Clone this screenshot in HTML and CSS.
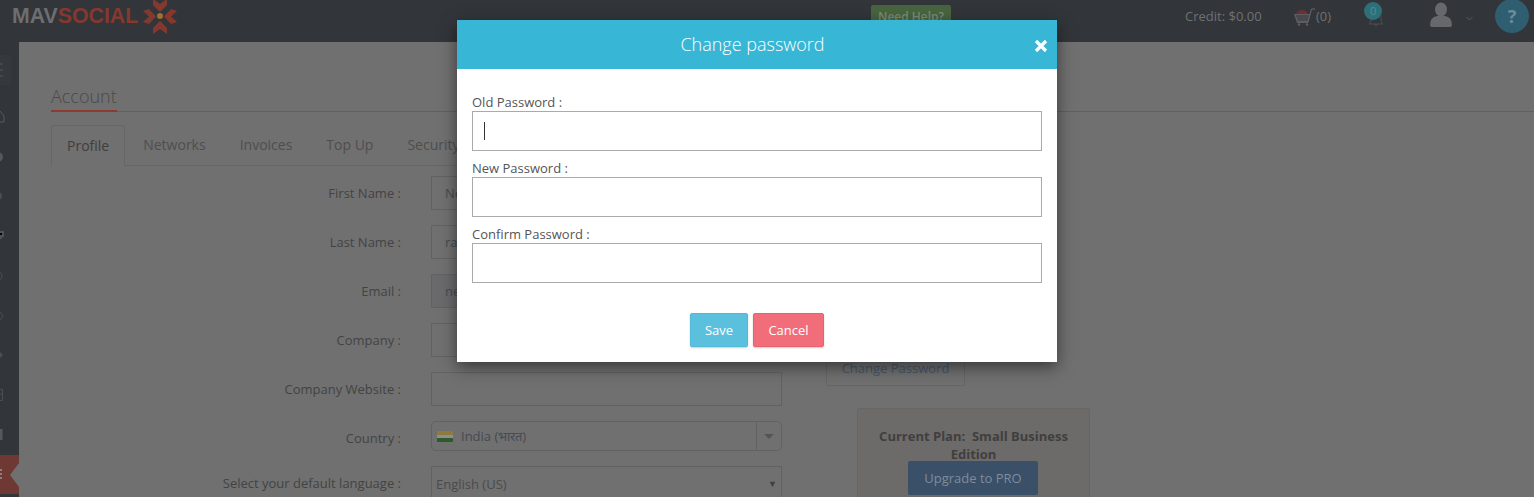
FILE: index.html
```html
<!DOCTYPE html>
<html lang="en">
<head>
  <meta charset="UTF-8" />
  <title>Account - Change Password</title>
  <link rel="stylesheet" href="styles.css">
</head>
<body>

  <!-- Top bar -->
  <div class="topbar">
    <div class="logo">
      <span class="logo-mav">MAV</span><span class="logo-social">SOCIAL</span>
      <svg class="logo-mark" width="38" height="34" viewBox="0 0 38 34">
        <g fill="#85392e">
          <path d="M12 -1 L19 4 L26 -1 L26 5 L19 12 L12 5 Z"/>
          <path d="M12 34 L19 29 L26 34 L26 28 L19 21 L12 28 Z"/>
          <path d="M2 11 L8 16.500 L2 22 L8 24 L15 16.500 L8 9 Z"/>
          <path d="M36 11 L30 16.500 L36 22 L30 24 L23 16.500 L30 9 Z"/>
        </g>
        <circle cx="19" cy="16" r="3" fill="#a0702e"/>
      </svg>
    </div>
    <a class="need-help">Need Help?</a>
    <span class="credit">Credit: $0.00</span>
    <div class="cart">
      <svg width="22" height="20" viewBox="0 0 22 20">
        <path d="M3 8 A6.500 6.500 0 0 1 15 8 Z" fill="#6e2f33"/>
        <path d="M1 8 H17 L15 17 H4 Z" fill="#5c5f62"/>
        <path d="M3 10 H16 M4 12 H15.500 M4.500 14 H15" stroke="#32353a" stroke-width="1"/>
        <path d="M15 16 L18.500 3 H22" stroke="#66686a" stroke-width="1" fill="none"/>
        <circle cx="6" cy="18.500" r="1.200" fill="#5c5f62"/>
        <circle cx="14" cy="18.500" r="1.200" fill="#5c5f62"/>
      </svg>
      <span>(0)</span>
    </div>
    <div class="bell">
      <svg width="16" height="12" viewBox="0 0 16 12">
        <path d="M3 1 V6 Q3 9 1 10 H15 Q13 9 13 6 V1 M6 11 H10" stroke="#4c4f53" fill="none"/>
      </svg>
      <span class="bell-count">0</span>
    </div>
    <div class="user">
      <svg width="22" height="26" viewBox="0 0 22 26">
        <ellipse cx="11" cy="7.500" rx="6" ry="7" fill="#66686b"/>
        <path d="M0 23 Q0 15 7 14 H15 Q22 15 22 23 Q22 25 20 25 H2 Q0 25 0 23 Z" fill="#66686b"/>
      </svg>
      <svg class="user-caret" width="7" height="5" viewBox="0 0 7 5">
        <path d="M0.500 1 L3.500 4 L6.500 1" stroke="#5a5d60" fill="none"/>
      </svg>
    </div>
    <div class="help">?</div>
  </div>

  <div class="wrapper">
    <!-- Collapsed sidebar -->
    <div class="sidebar">
      <div class="side-menu">
        <svg width="4" height="14" viewBox="0 0 4 14"><path d="M0 1 H3 M0 7 H3 M0 13 H3" stroke="#55585c" stroke-width="1"/></svg>
      </div>
      <div class="side-item"><svg width="5" height="12" viewBox="0 0 5 12"><path d="M-2 5 L0 0 L4 5 V11 H-2" stroke="#55585c" fill="none"/></svg></div>
      <div class="side-item"><svg width="3" height="10" viewBox="0 0 3 10"><circle cx="-2" cy="5" r="5" fill="#55585c"/></svg></div>
      <div class="side-item"><svg width="3" height="10" viewBox="0 0 3 10"><circle cx="-2" cy="5" r="4" fill="#4b4e52"/></svg></div>
      <div class="side-item"><svg width="4" height="10" viewBox="0 0 4 10"><path d="M0 1 H3 V5 H0 M0 7 H2" stroke="#4f5256" stroke-width="2"/></svg></div>
      <div class="side-item"><svg width="3" height="10" viewBox="0 0 3 10"><circle cx="-3" cy="5" r="5" stroke="#4b4e52" fill="none"/></svg></div>
      <div class="side-item"><svg width="4" height="10" viewBox="0 0 4 10"><path d="M0 1 L3 5 L0 9" stroke="#4b4e52" fill="none"/></svg></div>
      <div class="side-item"><svg width="4" height="10" viewBox="0 0 4 10"><path d="M0 2 L3 5 L0 8 Z" fill="#4b4e52"/></svg></div>
      <div class="side-item"><svg width="4" height="12" viewBox="0 0 4 12"><path d="M0 0.500 H2.500 V11.500 H0 M0 5 H2.500" stroke="#4b4e52" fill="none"/></svg></div>
      <div class="side-item"><svg width="3" height="12" viewBox="0 0 3 12"><rect width="2.500" height="11" fill="#55585c"/></svg></div>
      <div class="side-active"><svg width="3" height="10" viewBox="0 0 3 10"><path d="M0 1 H2 M0 5 H2 M0 9 H2" stroke="#8f7f7d" stroke-width="2"/></svg></div>
    </div>

    <!-- Main content -->
    <div class="content">
      <div class="page-title"><span>Account</span></div>

      <div class="tabs">
        <a class="tab active">Profile</a>
        <a class="tab">Networks</a>
        <a class="tab">Invoices</a>
        <a class="tab">Top Up</a>
        <a class="tab">Security</a>
      </div>

      <div class="profile">
        <div class="form">
          <div class="row"><label>First Name :</label><div class="field">Neha</div></div>
          <div class="row"><label>Last Name :</label><div class="field">rana</div></div>
          <div class="row"><label>Email :</label><div class="field readonly">neha</div></div>
          <div class="row"><label>Company :</label><div class="field"></div></div>
          <div class="row"><label>Company Website :</label><div class="field"></div></div>
          <div class="row row-country">
            <label>Country :</label>
            <div class="field country">
              <span class="flag"></span>
              <span class="country-name">India (भारत)</span>
              <span class="country-arrow"></span>
            </div>
          </div>
          <div class="row row-lang">
            <label>Select your default language :</label>
            <div class="field lang">English (US)<span class="lang-arrow">▼</span></div>
          </div>
        </div>

        <div class="side-panel">
          <a class="change-btn">Change Password</a>
          <div class="plan">
            <div class="plan-name">Current Plan:&nbsp; Small Business Edition</div>
            <a class="upgrade">Upgrade to PRO</a>
          </div>
        </div>
      </div>
    </div>
  </div>

  <!-- Change password modal -->
  <div class="modal">
    <div class="modal-head">
      <h2>Change password</h2>
      <svg class="modal-close" width="14" height="14" viewBox="0 0 14 14">
        <path d="M2 2 L12 12 M12 2 L2 12" stroke="#fff" stroke-width="3.200"/>
      </svg>
    </div>
    <div class="modal-body">
      <label>Old Password :</label>
      <div class="pw-input"><span class="caret"></span></div>
      <label>New Password :</label>
      <div class="pw-input"></div>
      <label>Confirm Password :</label>
      <div class="pw-input"></div>
    </div>
    <div class="modal-foot">
      <button class="btn-save">Save</button>
      <button class="btn-cancel">Cancel</button>
    </div>
  </div>

</body>
</html>
```

FILE: styles.css
```css
html, body {
  margin: 0;
  padding: 0;
  height: 100%;
  overflow: hidden;
  font-family: "Open Sans", Arial, sans-serif;
  font-size: 13px;
  background-color: #707070;
  color: #434343;
}

/* Top bar */
.topbar {
  display: flex;
  align-items: flex-start;
  height: 42px;
  background-color: #32353a;
  color: #6e6e6e;
}
.logo {
  display: flex;
  width: 180px;
  padding-left: 12px;
  box-sizing: border-box;
  font-family: "Liberation Sans", Arial, sans-serif;
  font-weight: bold;
  font-size: 21.300px;
  line-height: 32px;
}
.logo-mav {
  color: #6d6e6f;
}
.logo-social {
  color: #85392e;
  margin-right: 3px;
}
.logo-mark {
  flex: none;
}
.need-help {
  margin: 5px 0 0 691px;
  width: 80px;
  height: 24px;
  line-height: 24px;
  text-align: center;
  font-size: 12px;
  font-weight: 600;
  background-color: #48643f;
  color: #7d8a78;
  border-radius: 2px;
}
.credit {
  margin: 6px 0 0 234px;
  line-height: 20px;
  color: #6f7173;
  width: 78px;
}
.cart {
  display: flex;
  gap: 1px;
  margin: 6px 0 0 30px;
  line-height: 20px;
  color: #6f7173;
}
.bell {
  position: relative;
  margin: 0 0 0 33px;
  width: 20px;
  height: 28px;
}
.bell svg {
  position: absolute;
  left: 4px;
  top: 14px;
}
.bell-count {
  position: absolute;
  left: 0;
  top: 2px;
  width: 18px;
  height: 18px;
  line-height: 18px;
  font-size: 11px;
  text-align: center;
  border-radius: 50%;
  background-color: #2d7079;
  color: #5a8a90;
}
.user {
  display: flex;
  align-items: center;
  margin: 2px 0 0 46px;
}
.user-caret {
  margin: 7px 0 0 14px;
}
.help {
  margin: -1px 0 0 22px;
  width: 34px;
  height: 34px;
  line-height: 34px;
  border-radius: 50%;
  text-align: center;
  font-size: 18px;
  font-weight: bold;
  background-color: #2f5e70;
  color: #6e8c98;
}

/* Layout */
.wrapper {
  display: flex;
  height: 455px;
}

/* Sidebar */
.sidebar {
  flex: none;
  width: 19px;
  background-color: #32353a;
}
.side-menu {
  display: flex;
  align-items: center;
  width: 11px;
  height: 30px;
  margin: 13px 0 12px;
  background-color: #35383d;
}
.side-item {
  display: flex;
  align-items: center;
  height: 39.750px;
}
.side-active {
  position: relative;
  display: flex;
  align-items: center;
  height: 39px;
  background-color: #6e3833;
}
.side-active::after {
  content: "";
  position: absolute;
  right: 0;
  top: 8px;
  border-top: 12px solid transparent;
  border-bottom: 12px solid transparent;
  border-right: 9px solid #707070;
}

/* Main content */
.content {
  flex: 1;
  padding: 40px 0 0 32px;
  overflow: hidden;
}
.page-title {
  height: 29px;
  border-bottom: 1px solid #606060;
  font-size: 18px;
  font-weight: 300;
  color: #4a4a4a;
  line-height: 29px;
}
.page-title span {
  display: inline-block;
  height: 28px;
  border-bottom: 2px solid #8e3a2f;
}

/* Tabs */
.tabs {
  display: flex;
  gap: 2px;
  margin-top: 13px;
  height: 41px;
  box-sizing: border-box;
  width: 1000px;
  border-bottom: 1px solid #666;
  font-size: 14px;
}
.tab {
  padding: 0 16px;
  line-height: 40px;
  color: #4e4e4e;
}
.tab.active {
  height: 41px;
  box-sizing: border-box;
  border: 1px solid #666;
  border-bottom-color: #707070;
  border-radius: 3px 3px 0 0;
  padding: 0 15px;
  color: #3e3e3e;
}

/* Profile form */
.profile {
  display: flex;
  margin-top: 10px;
}
.form {
  flex: none;
  width: 731px;
}
.row {
  display: flex;
  align-items: center;
  height: 34px;
  margin-bottom: 15px;
}
.row label {
  flex: none;
  width: 350px;
  margin-right: 30px;
  text-align: right;
}
.field {
  flex: none;
  width: 351px;
  height: 34px;
  box-sizing: border-box;
  padding-left: 13px;
  line-height: 32px;
  border: 1px solid #626262;
  color: #454a52;
}
.field.readonly {
  background-color: #6a6a6d;
}
.row-country {
  height: 30px;
}
.row-country label {
  padding-top: 4px;
}
.country {
  display: flex;
  align-items: center;
  height: 30px;
  padding-left: 5px;
  line-height: 28px;
  border-radius: 5px;
}
.flag {
  width: 16px;
  height: 11px;
  margin-right: 8px;
  background: linear-gradient(#8e7a3e 0 36%, #8e8e8e 36% 64%, #2f5a2e 64%);
}
.country-name {
  flex: 1;
}
.country-arrow {
  width: 25px;
  height: 28px;
  box-sizing: border-box;
  border-left: 1px solid #626262;
  position: relative;
}
.country-arrow::after {
  content: "";
  position: absolute;
  left: 7px;
  top: 12px;
  border: 5px solid transparent;
  border-top: 5px solid #555;
  border-bottom-width: 0;
}
.row-lang {
  height: 36px;
  margin-top: 15px;
}
.row-lang label {
  margin-top: -3px;
}
.lang {
  position: relative;
  height: 40px;
  margin-top: 4px;
  padding-left: 4px;
  line-height: 35px;
  color: #4b4b4b;
}
.lang-arrow {
  position: absolute;
  right: 4px;
  top: -1px;
  font-size: 9px;
  color: #3f3f3f;
}

/* Right column */
.side-panel {
  flex: none;
  width: 300px;
  margin-left: 44px;
}
.change-btn {
  display: block;
  box-sizing: border-box;
  width: 139px;
  height: 44px;
  margin-top: 166px;
  line-height: 50px;
  text-align: center;
  border: 1px solid #666;
  border-radius: 2px;
  color: #47566a;
}
.plan {
  box-sizing: border-box;
  width: 233px;
  height: 120px;
  margin: 22px 0 0 31px;
  padding-top: 18px;
  text-align: center;
  border: 1px solid #666;
  border-radius: 2px;
  background-color: #6d6a6a;
}
.plan-name {
  font-weight: bold;
  line-height: 18px;
  padding: 0 10px;
  color: #3f3f3f;
}
.upgrade {
  display: block;
  width: 130px;
  height: 34px;
  margin: -2px 0 0 50px;
  line-height: 34px;
  border-radius: 2px;
  background-color: #3a5068;
  color: #7e8c9c;
}

/* Modal */
.modal {
  position: absolute;
  left: 457px;
  top: 20px;
  width: 600px;
  height: 342px;
  background-color: #fff;
  box-shadow: 0 5px 15px rgba(0, 0, 0, 0.5);
}
.modal-head {
  position: relative;
  height: 49px;
  background-color: #38b6d6;
  color: #fff;
}
.modal-head h2 {
  margin: 0;
  line-height: 49px;
  text-align: center;
  font-size: 18px;
  font-weight: 300;
  padding-right: 9px;
}
.modal-close {
  position: absolute;
  right: 9px;
  top: 19px;
}
.modal-body {
  padding: 25px 15px 0;
}
.modal-body label {
  display: block;
  height: 17px;
  line-height: 17px;
  color: #555;
}
.pw-input {
  display: flex;
  align-items: center;
  height: 40px;
  box-sizing: border-box;
  margin-bottom: 9px;
  padding-left: 11px;
  border: 1px solid #aaa;
}
.caret {
  width: 1px;
  height: 18px;
  background-color: #333;
}
.modal-foot {
  display: flex;
  justify-content: center;
  gap: 5px;
  margin-top: 30px;
}
.modal-foot button {
  height: 34px;
  padding: 0;
  font-family: inherit;
  font-size: 13px;
  font-weight: 500;
  color: #fff;
  border-radius: 2px;
  cursor: pointer;
  box-shadow: 0 1px 2px rgba(0, 0, 0, 0.2);
}
.btn-save {
  width: 58px;
  background-color: #5bc0de;
  border: 1px solid #54b8d6;
}
.btn-cancel {
  width: 71px;
  background-color: #f26d7a;
  border: 1px solid #e9606e;
}
```
